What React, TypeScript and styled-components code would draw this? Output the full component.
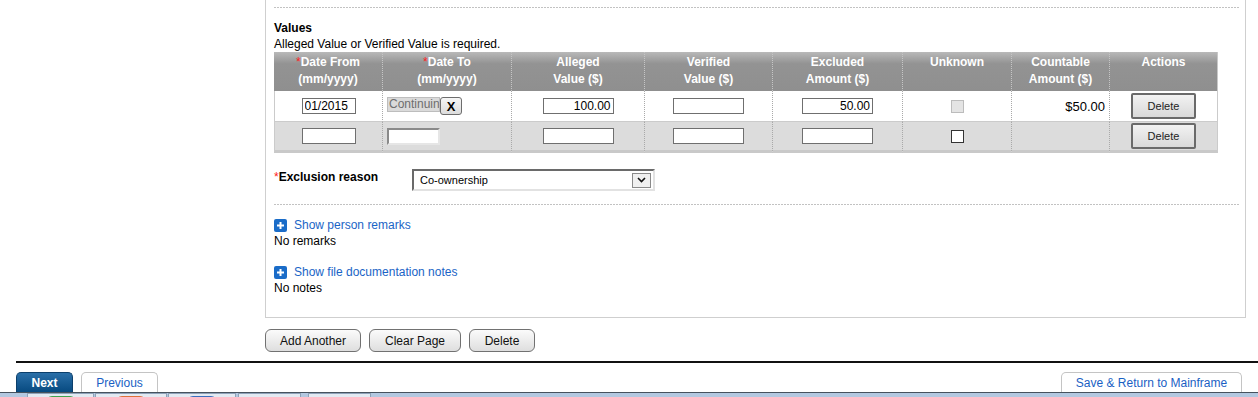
import styled, { createGlobalStyle } from "styled-components";

const GlobalStyle = createGlobalStyle`
  html, body {
    margin: 0;
    padding: 0;
    background: #fff;
  }
  body {
    font-family: "Liberation Sans", Arial, sans-serif;
    font-size: 12px;
    color: #000;
    overflow: hidden;
  }
`;

const Page = styled.div`
  padding-left: 16px;
`;

const Panel = styled.section`
  margin-left: 249px;
  width: 981px;
  box-sizing: border-box;
  border: 1px solid #cfcfcf;
  border-top: none;
  padding: 7px 6px 21px 8px;
`;

const Dashes = styled.div<{ $gap?: number }>`
  height: 1px;
  margin-top: ${(p) => p.$gap ?? 0}px;
  background: repeating-linear-gradient(90deg, #c2c2c2 0 2px, transparent 2px 3px);
`;

const Title = styled.div`
  margin-top: 12px;
  font-weight: bold;
  line-height: 16px;
`;

const Note = styled.div`
  line-height: 16px;
`;

const Grid = styled.table`
  border-collapse: separate;
  border-spacing: 0;
  table-layout: fixed;
  width: 944px;
`;

const HeadCell = styled.th<{ $w: number }>`
  width: ${(p) => p.$w}px;
  box-sizing: border-box;
  height: 39px;
  padding: 2px 2px 0;
  vertical-align: top;
  background: linear-gradient(#b9b9b9 0, #939393 30%, #8f8f8f 100%);
  color: #fff;
  font-weight: bold;
  font-size: 12px;
  line-height: 17px;
  text-align: center;
  border-right: 1px dotted #c6c6c6;
  &:last-child {
    border-right: 1px solid #c8c8c8;
  }
`;

const Star = styled.span`
  color: #ff2020;
  font-weight: normal;
`;

const Row = styled.tr<{ $shade?: boolean }>`
  background: ${(p) => (p.$shade ? "#dcdcdc" : "#fff")};
  & > td {
    border-bottom: ${(p) => (p.$shade ? "3px solid #c9c9c9" : "1px solid #cbcbcb")};
  }
`;

const Cell = styled.td<{ $align?: "left" | "center" | "right"; $big?: boolean }>`
  box-sizing: border-box;
  height: 31px;
  padding: 0 4px;
  text-align: ${(p) => p.$align ?? "center"};
  vertical-align: middle;
  border-right: 1px dotted #a9a9a9;
  font-size: ${(p) => (p.$big ? 13 : 12)}px;
  &:first-child {
    border-left: 1px solid #cbcbcb;
  }
  &:last-child {
    border-right: 1px solid #cbcbcb;
  }
`;

const TextField = styled.input<{ $w: number; $right?: boolean }>`
  display: block;
  margin: 0 auto;
  width: ${(p) => p.$w}px;
  height: 16px;
  box-sizing: border-box;
  border: 1px solid #6f6f6f;
  padding: 0 2px;
  font: 12px "Liberation Sans", Arial, sans-serif;
  text-align: ${(p) => (p.$right ? "right" : "left")};
  background: #fff;
  color: #000;
  outline: none;
`;

const InsetField = styled.input`
  display: block;
  width: 53px;
  height: 17px;
  box-sizing: border-box;
  border: 2px solid;
  border-color: #8a8a8a #e6e6e6 #e6e6e6 #8a8a8a;
  padding: 0 2px;
  font: 12px "Liberation Sans", Arial, sans-serif;
  background: #fff;
  outline: none;
`;

const DateGroup = styled.div`
  display: flex;
  align-items: flex-start;
`;

const ReadOnly = styled.div`
  width: 53px;
  height: 15px;
  box-sizing: border-box;
  border: 1px solid #bdbdbd;
  background: #dadada;
  color: #6e6e6e;
  font-size: 12px;
  line-height: 13px;
  padding-left: 1px;
  overflow: hidden;
  white-space: nowrap;
`;

const ClearX = styled.button`
  width: 22px;
  height: 18px;
  box-sizing: border-box;
  padding: 0;
  border: 1px solid #6d6d6d;
  border-radius: 3px;
  background: linear-gradient(#f6f6f6, #dcdcdc);
  font: bold 13px "Liberation Sans", Arial, sans-serif;
  line-height: 15px;
  color: #000;
`;

const Check = styled.span<{ $disabled?: boolean }>`
  display: block;
  margin: 0 auto;
  width: 13px;
  height: 13px;
  box-sizing: border-box;
  border: 1px solid ${(p) => (p.$disabled ? "#bcbcbc" : "#333")};
  background: ${(p) => (p.$disabled ? "#e4e4e4" : "#fff")};
`;

const RowButton = styled.button`
  display: block;
  margin: 0 auto;
  width: 65px;
  height: 26px;
  box-sizing: border-box;
  border: 2px solid #6a6a6a;
  border-radius: 2px;
  background: linear-gradient(#f2f2f2, #d9d9d9);
  font: 11px "Liberation Sans", Arial, sans-serif;
  color: #222;
`;

const FieldRow = styled.div`
  display: flex;
  align-items: flex-start;
  margin-top: 16px;
`;

const Label = styled.div`
  width: 138px;
  font-weight: bold;
  line-height: 16px;
`;

const SelectBox = styled.div`
  width: 243px;
  height: 22px;
  box-sizing: border-box;
  display: flex;
  align-items: center;
  justify-content: space-between;
  border: 2px solid;
  border-color: #6a6a6a #e2e2e2 #e2e2e2 #6a6a6a;
  padding: 0 2px 0 6px;
  font-size: 11px;
  background: #fff;
`;

const SelectArrow = styled.span`
  width: 19px;
  height: 15px;
  box-sizing: border-box;
  display: flex;
  align-items: center;
  justify-content: center;
  border: 1px solid #8a8a8a;
  background: #f0f0f0;
`;

const Toggle = styled.div<{ $gap: number }>`
  display: flex;
  align-items: center;
  gap: 7px;
  margin-top: ${(p) => p.$gap}px;
  line-height: 16px;
  color: #1a64c6;
`;

const Actions = styled.div`
  display: flex;
  gap: 8px;
  margin: 11px 0 0 249px;
`;

const PageButton = styled.button<{ $w: number }>`
  width: ${(p) => p.$w}px;
  height: 23px;
  box-sizing: border-box;
  border: 1px solid #717171;
  border-radius: 6px;
  background: linear-gradient(#fbfbfb, #dedede);
  font: 12px "Liberation Sans", Arial, sans-serif;
  color: #111;
  padding: 0;
`;

const Rule = styled.div`
  margin-top: 9px;
  height: 2px;
  background: #111;
`;

const Nav = styled.div`
  display: flex;
  gap: 8px;
  margin-top: 9px;
  height: 20px;
  padding-right: 16px;
`;

const NavButton = styled.button<{ $w: number; $primary?: boolean }>`
  width: ${(p) => p.$w}px;
  height: 20px;
  flex: none;
  box-sizing: border-box;
  padding: 1px 0 0;
  border-radius: 5px 5px 0 0;
  border: 1px solid ${(p) => (p.$primary ? "#0b3f6b" : "#c4c4c4")};
  border-bottom: none;
  background: ${(p) => (p.$primary ? "linear-gradient(#2a6fa8, #074a80)" : "#fff")};
  color: ${(p) => (p.$primary ? "#fff" : "#1a5fc4")};
  font: ${(p) => (p.$primary ? "bold " : "")}12px "Liberation Sans", Arial, sans-serif;
  line-height: 18px;
  text-align: center;
  &:last-child {
    margin-left: auto;
  }
`;

const Taskbar = styled.div`
  margin-left: -16px;
  height: 6px;
  border-top: 1px solid #46525e;
  background: #b3c8e0;
  display: flex;
  padding-left: 27px;
  gap: 1px;
`;

const Tab = styled.div<{ $w: number; $space?: number }>`
  width: ${(p) => p.$w}px;
  margin-left: ${(p) => p.$space ?? 0}px;
  box-sizing: border-box;
  border: 1px solid #8ea2b8;
  border-bottom: none;
  background: #e3eaf2;
  display: flex;
  justify-content: center;
  padding-top: 2px;
`;

const Blob = styled.span<{ $color: string }>`
  width: 30px;
  height: 6px;
  border-radius: 6px 6px 0 0;
  background: ${(p) => p.$color};
`;

const columns = [
  { w: 109, head: <><Star>*</Star>Date From<br />(mm/yyyy)</> },
  { w: 129, head: <><Star>*</Star>Date To<br />(mm/yyyy)</> },
  { w: 133, head: <>Alleged<br />Value ($)</> },
  { w: 128, head: <>Verified<br />Value ($)</> },
  { w: 130, head: <>Excluded<br />Amount ($)</> },
  { w: 109, head: <>Unknown</> },
  { w: 98, head: <>Countable<br />Amount ($)</> },
  { w: 108, head: <>Actions</> },
];

const PlusIcon = () => (
  <svg width="13" height="13" viewBox="0 0 13 13">
    <rect width="13" height="13" rx="2" fill="#1a6cc8" />
    <path d="M6.5 3v7M3 6.5h7" stroke="#fff" strokeWidth="2" />
  </svg>
);

const Chevron = () => (
  <svg width="9" height="6" viewBox="0 0 9 6">
    <path d="M1 1l3.5 3.5L8 1" fill="none" stroke="#111" strokeWidth="1.6" />
  </svg>
);

export default function App() {
  return (
    <>
      <GlobalStyle />
      <Page>
        <Panel>
          <Dashes />
          <Title>Values</Title>
          <Note>Alleged Value or Verified Value is required.</Note>
          <Grid>
            <thead>
              <tr>
                {columns.map((c, i) => (
                  <HeadCell key={i} $w={c.w}>
                    {c.head}
                  </HeadCell>
                ))}
              </tr>
            </thead>
            <tbody>
              <Row>
                <Cell><TextField $w={54} defaultValue="01/2015" /></Cell>
                <Cell $align="left">
                  <DateGroup>
                    <ReadOnly>Continuing</ReadOnly>
                    <ClearX>X</ClearX>
                  </DateGroup>
                </Cell>
                <Cell><TextField $w={71} $right defaultValue="100.00" /></Cell>
                <Cell><TextField $w={71} /></Cell>
                <Cell><TextField $w={71} $right defaultValue="50.00" /></Cell>
                <Cell><Check $disabled /></Cell>
                <Cell $align="right" $big>$50.00</Cell>
                <Cell><RowButton>Delete</RowButton></Cell>
              </Row>
              <Row $shade>
                <Cell><TextField $w={54} /></Cell>
                <Cell $align="left"><InsetField /></Cell>
                <Cell><TextField $w={71} $right /></Cell>
                <Cell><TextField $w={71} /></Cell>
                <Cell><TextField $w={71} $right /></Cell>
                <Cell><Check /></Cell>
                <Cell $align="right"></Cell>
                <Cell><RowButton>Delete</RowButton></Cell>
              </Row>
            </tbody>
          </Grid>
          <FieldRow>
            <Label><Star>*</Star>Exclusion reason</Label>
            <SelectBox>
              <span>Co-ownership</span>
              <SelectArrow><Chevron /></SelectArrow>
            </SelectBox>
          </FieldRow>
          <Dashes $gap={13} />
          <Toggle $gap={12}><PlusIcon />Show person remarks</Toggle>
          <Note>No remarks</Note>
          <Toggle $gap={15}><PlusIcon />Show file documentation notes</Toggle>
          <Note>No notes</Note>
        </Panel>
        <Actions>
          <PageButton $w={96}>Add Another</PageButton>
          <PageButton $w={92}>Clear Page</PageButton>
          <PageButton $w={66}>Delete</PageButton>
        </Actions>
        <Rule />
        <Nav>
          <NavButton $w={57} $primary>Next</NavButton>
          <NavButton $w={77}>Previous</NavButton>
          <NavButton $w={181}>Save &amp; Return to Mainframe</NavButton>
        </Nav>
        <Taskbar>
          <Tab $w={67}><Blob $color="#3fa34d" /></Tab>
          <Tab $w={72}><Blob $color="#e0703a" /></Tab>
          <Tab $w={68}><Blob $color="#3a6fc0" /></Tab>
          <Tab $w={63} $space={1} />
          <Tab $w={63} $space={6} />
        </Taskbar>
      </Page>
    </>
  );
}
